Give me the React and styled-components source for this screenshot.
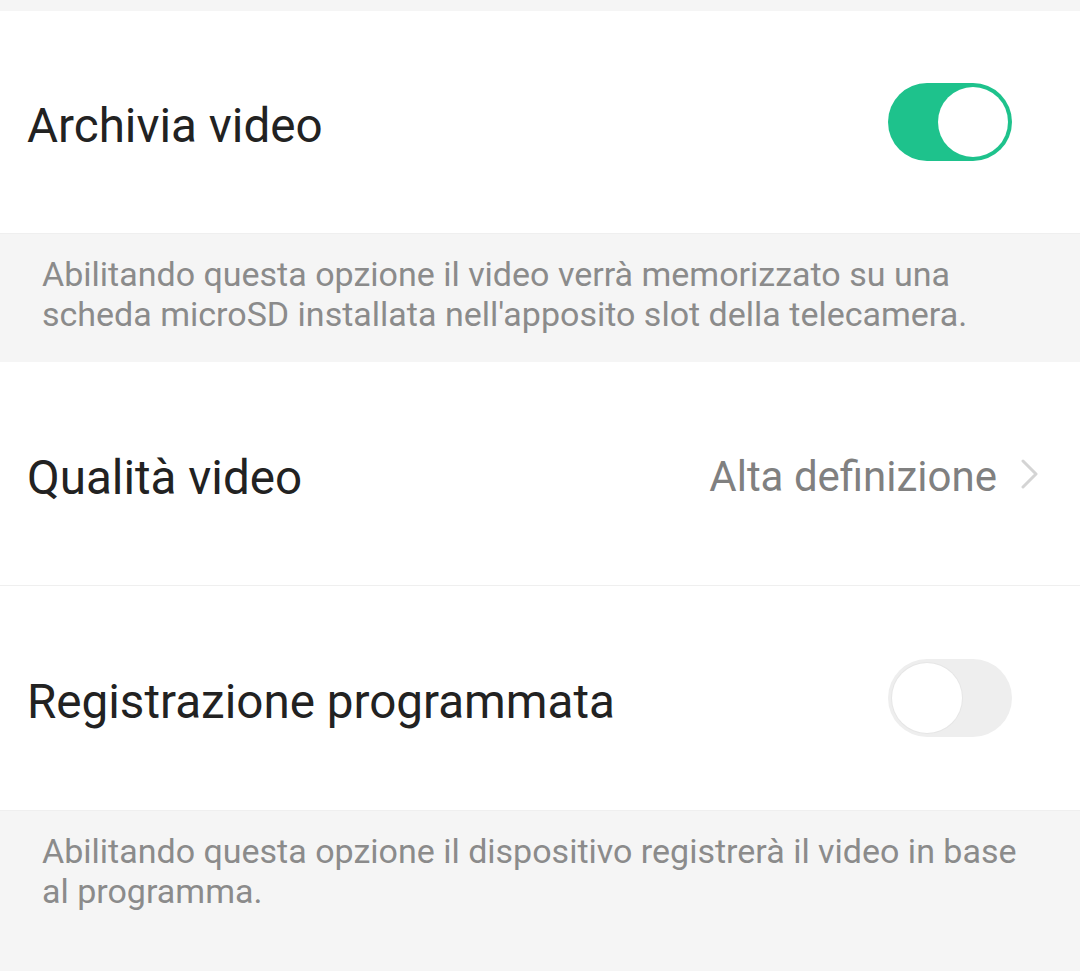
import React from "react";
import styled, { createGlobalStyle } from "styled-components";

const GlobalStyle = createGlobalStyle`
  html, body {
    margin: 0;
    padding: 0;
    background: #f5f5f5;
  }
  body {
    font-family: Roboto, "Noto Sans", "Liberation Sans", sans-serif;
    -webkit-font-smoothing: antialiased;
  }
`;

const Page = styled.div`
  width: 1080px;
  height: 971px;
  overflow: hidden;
  background: #f5f5f5;
  padding-top: 11px;
  box-sizing: border-box;
`;

const Row = styled.div`
  display: flex;
  align-items: center;
  justify-content: space-between;
  height: ${(p) => p.h || 224}px;
  padding: 0 68px 0 27px;
  background: #fff;
  border-bottom: 1px solid ${(p) => (p.divider ? "#efefef" : "transparent")};
  box-sizing: border-box;
`;

const Label = styled.span`
  padding-top: 8px;
  font-size: 47.6px;
  color: #222;
`;

const Value = styled.div`
  display: flex;
  align-items: center;
  gap: 24px;
  margin-right: -27px;
  padding-top: 6px;
  font-size: 42px;
  color: #808080;

  svg {
    margin-top: -6px;
  }
`;

const Note = styled.div`
  padding: 20px 42px 28px 42px;
  background: #f5f5f5;
  font-size: 34px;
  line-height: 40px;
  color: #8b8b8b;
  border-top: 1px solid #efefef;
`;

const Track = styled.div`
  position: relative;
  width: 124px;
  height: 78px;
  border-radius: 39px;
  background: ${(p) => (p.on ? "#1ec28c" : "#eeeeee")};
  flex-shrink: 0;
`;

const Knob = styled.div`
  position: absolute;
  top: 4px;
  left: ${(p) => (p.on ? "50px" : "4px")};
  width: 70px;
  height: 70px;
  border-radius: 50%;
  background: #fff;
  box-shadow: ${(p) => (p.on ? "none" : "0 0 0 1px #e6e6e6")};
`;

const Toggle = ({ on }) => (
  <Track on={on}>
    <Knob on={on} />
  </Track>
);

const Chevron = () => (
  <svg width="18" height="30" viewBox="0 0 18 30" fill="none">
    <path d="M2 2 L15 15 L2 28" stroke="#d4d4d4" strokeWidth="3" strokeLinecap="round" strokeLinejoin="round" />
  </svg>
);

export default function App() {
  return (
    <Page>
      <GlobalStyle />
      <Row h={222}>
        <Label>Archivia video</Label>
        <Toggle on />
      </Row>
      <Note>
        Abilitando questa opzione il video verrà memorizzato su una scheda microSD installata
        nell'apposito slot della telecamera.
      </Note>
      <Row divider>
        <Label>Qualità video</Label>
        <Value>
          Alta definizione
          <Chevron />
        </Value>
      </Row>
      <Row>
        <Label>Registrazione programmata</Label>
        <Toggle />
      </Row>
      <Note>
        Abilitando questa opzione il dispositivo registrerà il video in base al programma.
      </Note>
    </Page>
  );
}
